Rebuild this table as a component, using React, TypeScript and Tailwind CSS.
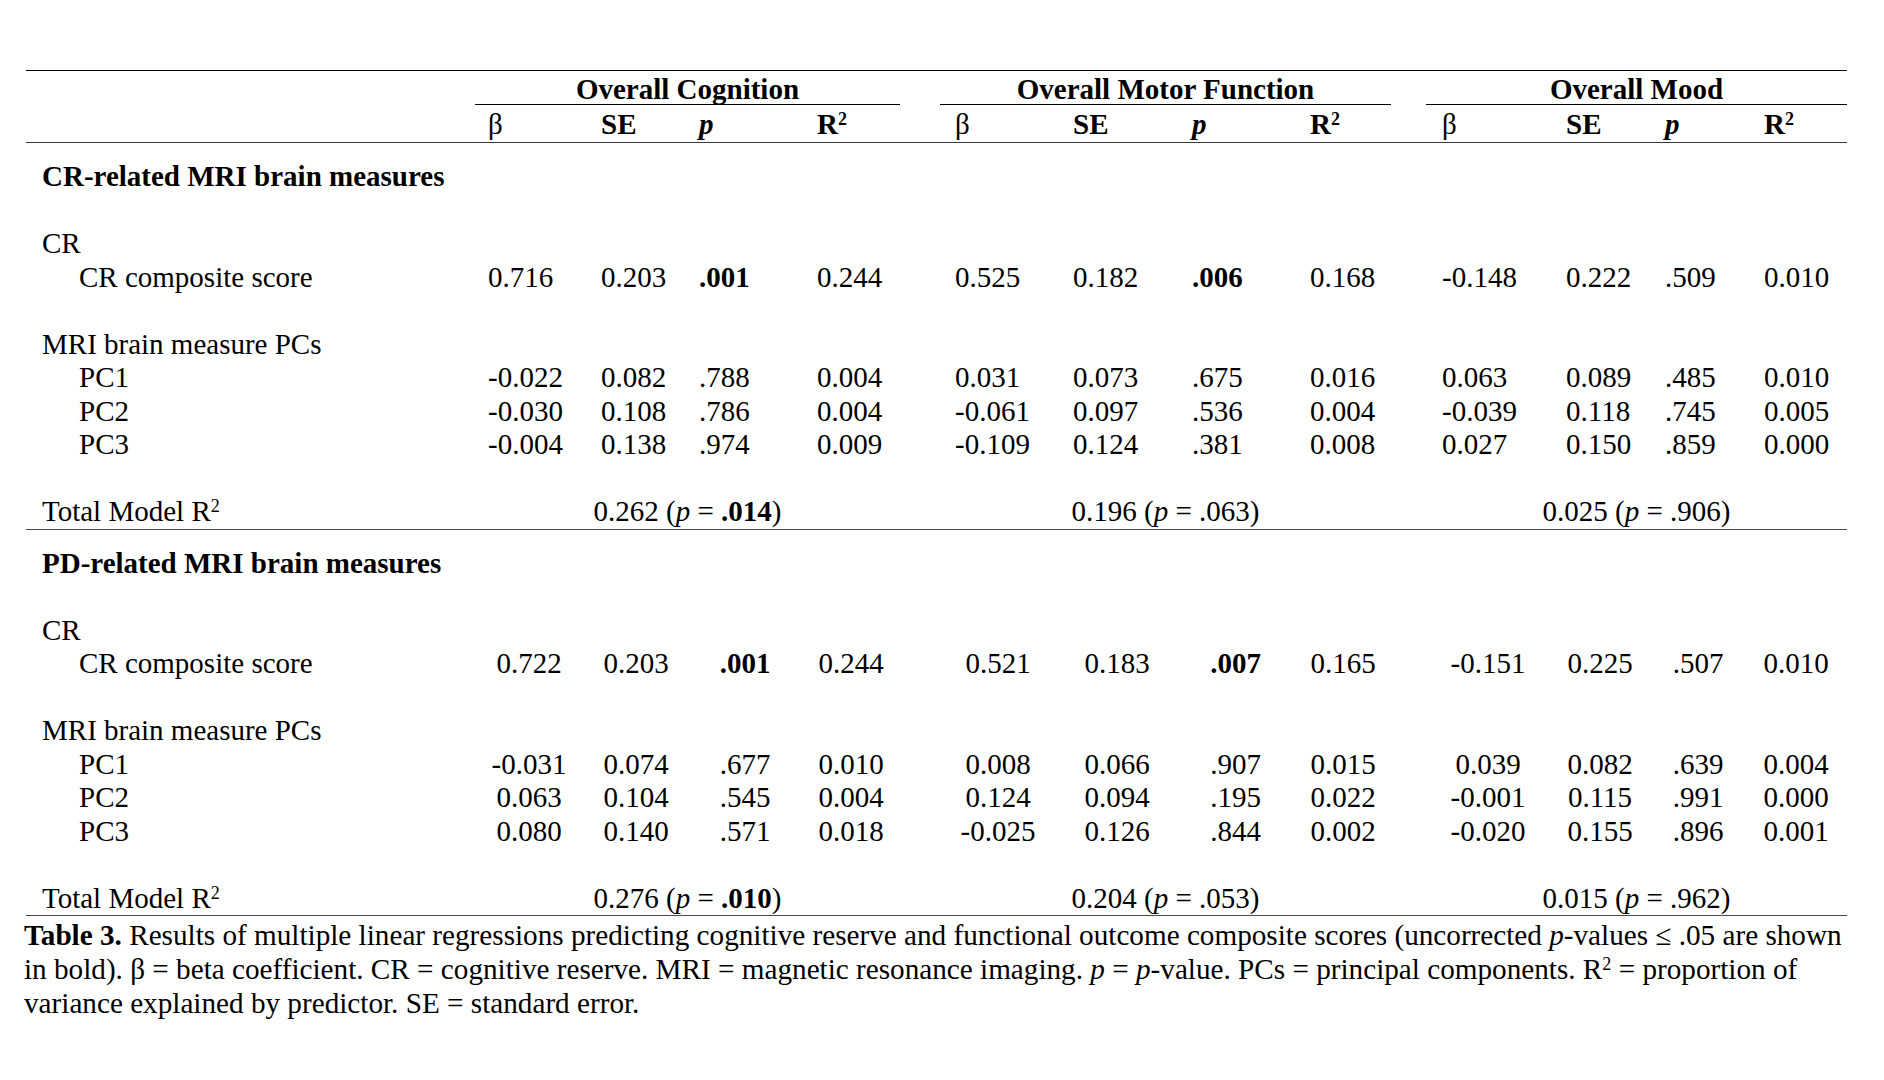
import React from 'react'

type Cell = string // prefix "*" = bold
const LEFT = [
  'grid grid-cols-[113px_98px_118px_96px] pl-[13px]',
  'grid grid-cols-[118px_119px_118px_96px] pl-[15px]',
  'grid grid-cols-[124px_99px_99px_85px] pl-[16px]',
]
const CENTER = [
  'grid grid-cols-[80px_134px_84px_128px] pl-[14px] text-center',
  'grid grid-cols-[80px_158px_79px_136px] pl-[18px] text-center',
  'grid grid-cols-[80px_144px_52px_144px] pl-[22px] text-center',
]
const GROUP_W = ['w-[425px]', 'ml-[40px] w-[451px]', 'ml-[35px] w-[421px]']
const ROW = 'flex h-[33.5px] leading-[33.5px] whitespace-nowrap'

const sections = [
  {
    title: 'CR-related MRI brain measures',
    cols: LEFT,
    composite: ['0.716', '0.203', '*.001', '0.244', '0.525', '0.182', '*.006', '0.168', '-0.148', '0.222', '.509', '0.010'],
    pcs: [
      { label: 'PC1', v: ['-0.022', '0.082', '.788', '0.004', '0.031', '0.073', '.675', '0.016', '0.063', '0.089', '.485', '0.010'] },
      { label: 'PC2', v: ['-0.030', '0.108', '.786', '0.004', '-0.061', '0.097', '.536', '0.004', '-0.039', '0.118', '.745', '0.005'] },
      { label: 'PC3', v: ['-0.004', '0.138', '.974', '0.009', '-0.109', '0.124', '.381', '0.008', '0.027', '0.150', '.859', '0.000'] },
    ],
    totals: [
      { r: '0.262', p: '.014', bold: true },
      { r: '0.196', p: '.063', bold: false },
      { r: '0.025', p: '.906', bold: false },
    ],
  },
  {
    title: 'PD-related MRI brain measures',
    cols: CENTER,
    composite: ['0.722', '0.203', '*.001', '0.244', '0.521', '0.183', '*.007', '0.165', '-0.151', '0.225', '.507', '0.010'],
    pcs: [
      { label: 'PC1', v: ['-0.031', '0.074', '.677', '0.010', '0.008', '0.066', '.907', '0.015', '0.039', '0.082', '.639', '0.004'] },
      { label: 'PC2', v: ['0.063', '0.104', '.545', '0.004', '0.124', '0.094', '.195', '0.022', '-0.001', '0.115', '.991', '0.000'] },
      { label: 'PC3', v: ['0.080', '0.140', '.571', '0.018', '-0.025', '0.126', '.844', '0.002', '-0.020', '0.155', '.896', '0.001'] },
    ],
    totals: [
      { r: '0.276', p: '.010', bold: true },
      { r: '0.204', p: '.053', bold: false },
      { r: '0.015', p: '.962', bold: false },
    ],
  },
]

function Sq() {
  return <sup className="text-[18px]">2</sup>
}

function Val({ v }: { v: Cell }) {
  if (v.startsWith('*')) return <span className="font-bold">{v.slice(1)}</span>
  return <span>{v}</span>
}

function ValueRow({ label, values, cols }: { label: string; values: string[]; cols: string[] }) {
  return (
    <div className={ROW}>
      <div className="w-[449px] shrink-0 pl-[53px]">{label}</div>
      {[0, 1, 2].map((g) => (
        <div key={g} className={`${GROUP_W[g]} shrink-0 ${cols[g]}`}>
          {values.slice(g * 4, g * 4 + 4).map((v, i) => (
            <div key={i}>
              <Val v={v} />
            </div>
          ))}
        </div>
      ))}
    </div>
  )
}

function LabelRow({ label, bold }: { label?: string; bold?: boolean }) {
  return (
    <div className={ROW}>
      <div className={`pl-[16px] ${bold ? 'font-bold' : ''}`}>{label}</div>
    </div>
  )
}

export default function App() {
  return (
    <main className="min-h-screen w-[1884px] h-[1080px] bg-white text-black font-['Liberation_Serif',serif] text-[29px] pt-[70px] overflow-hidden">
      <div className="ml-[26px] w-[1821px]">
        <div className="border-t border-black" />

        {/* column headers */}
        <div className="flex h-[34px] leading-[37px] font-bold whitespace-nowrap">
          <div className="w-[449px] shrink-0" />
          <div className="w-[425px] shrink-0 text-center border-b border-black">Overall Cognition</div>
          <div className="ml-[40px] w-[451px] shrink-0 text-center border-b border-black">Overall Motor Function</div>
          <div className="ml-[35px] w-[421px] shrink-0 text-center border-b border-black">Overall Mood</div>
        </div>
        <div className="flex h-[37px] leading-[37px] pt-[1px] font-bold whitespace-nowrap">
          <div className="w-[449px] shrink-0" />
          {[0, 1, 2].map((g) => (
            <div key={g} className={`${GROUP_W[g]} shrink-0 ${LEFT[g]}`}>
              <div className="font-normal">β</div>
              <div>SE</div>
              <div className="italic">p</div>
              <div>
                R<Sq />
              </div>
            </div>
          ))}
        </div>
        <div className="border-t border-[#3a3a3a]" />

        {sections.map((s, si) => (
          <div key={si}>
            {si > 0 && <div className="border-t border-[#4a4a4a]" />}
            <div className="mt-[17px]">
              <LabelRow label={s.title} bold />
              <LabelRow />
              <LabelRow label="CR" />
              <ValueRow label="CR composite score" values={s.composite} cols={s.cols} />
              <LabelRow />
              <LabelRow label="MRI brain measure PCs" />
              {s.pcs.map((r) => (
                <ValueRow key={r.label} label={r.label} values={r.v} cols={s.cols} />
              ))}
              <LabelRow />
              <div className={ROW}>
                <div className="w-[449px] shrink-0 pl-[16px]">
                  Total Model R<Sq />
                </div>
                {s.totals.map((t, g) => (
                  <div key={g} className={`${GROUP_W[g]} shrink-0 text-center`}>
                    {t.r} (<i>p</i> = <span className={t.bold ? 'font-bold' : ''}>{t.p}</span>)
                  </div>
                ))}
              </div>
            </div>
          </div>
        ))}
        <div className="border-t border-[#4a4a4a]" />
      </div>

      {/* caption */}
      <p className="ml-[24px] mt-[2px] text-[29.2px] leading-[34px] whitespace-nowrap">
        <span className="font-bold">Table 3.</span> Results of multiple linear regressions predicting cognitive reserve and functional outcome composite scores (uncorrected <i>p</i>-values ≤ .05 are shown
        <br />
        in bold). β = beta coefficient. CR = cognitive reserve. MRI = magnetic resonance imaging. <i>p</i> = <i>p</i>-value. PCs = principal components. R<Sq /> = proportion of
        <br />
        variance explained by predictor. SE = standard error.
      </p>
    </main>
  )
}
